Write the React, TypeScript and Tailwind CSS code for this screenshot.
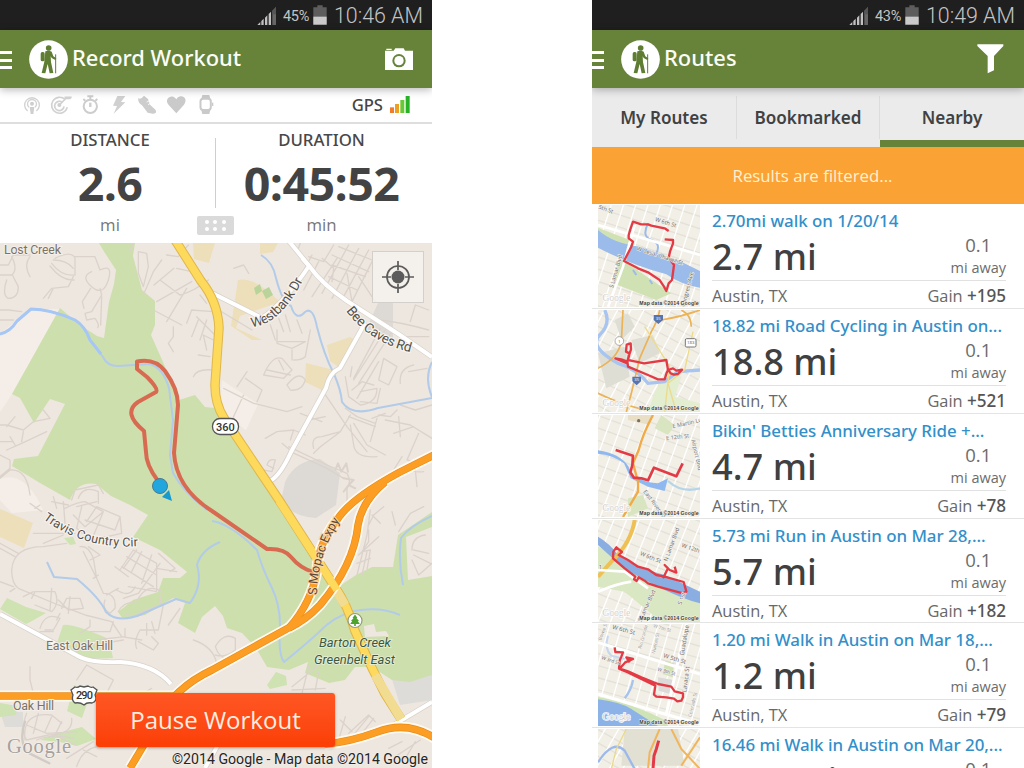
import type { ReactNode } from 'react';

const sans = "font-['Open_Sans','Noto_Sans',sans-serif]";
const noto = "font-['Noto_Sans','Open_Sans',sans-serif]";

function StatusBar({ battery, time }: { battery: string; time: string }) {
  return (
    <div className="flex h-[30px] shrink-0 items-center justify-end bg-[#1f1f1f] pr-[9px] font-['Roboto',sans-serif] text-[#c4c4c4]">
      <svg width="20" height="20" viewBox="0 0 60 60" className="mr-[6px]">
        <g fill="#c2c2c2">
          <path d="M1 60 L10 51 V60Z" />
          <path d="M13 60 V48 L20 41 V60Z M24 60 V38 L31 31 V60Z M35 60 V27 L42 20 V60Z" />
        </g>
        <path d="M46 60 V17 L57 6 V60Z" fill="#666" />
        <path d="M46 28 V17 L57 6 V28Z" fill="#555" />
      </svg>
      <span className="mt-[3px] w-[27px] text-[14.500px] tracking-[-0.3px] whitespace-nowrap">{battery}</span>
      <svg width="14" height="20" viewBox="0 0 42 60" className="mr-[7px] ml-[3px]">
        <path d="M13 1h16v6h12v52H1V7h12z" fill="#5d5d5d" />
        <path d="M1 35h40v24H1z" fill="#cacaca" />
      </svg>
      <span className="mt-[2px] flex w-[89px] justify-end text-[21.400px] font-light whitespace-nowrap">{time}</span>
    </div>
  );
}

function Hiker() {
  return (
    <svg width="39" height="39" viewBox="0 0 117 117" className="shrink-0">
      <circle cx="58.500" cy="58.500" r="58" fill="#fff" />
      <g fill="#5f7c33">
        <circle cx="59" cy="24" r="8.500" />
        <path d="M49 34 q10-4 19 1 l5 14 9 6-3 5-11-6-3-5 1 17 7 33-11 1-6-28-7 28-11-1 8-34z" />
        <rect x="35" y="36" width="12" height="28" rx="5" />
      </g>
      <path d="M80 43 V100" stroke="#5f7c33" strokeWidth="3" />
    </svg>
  );
}

function AppBar({ title, children }: { title: string; children: ReactNode }) {
  return (
    <div className="relative z-10 flex h-[58px] shrink-0 items-center bg-[#67833a] pr-[19px] shadow-[0_2px_8px_rgba(0,0,0,0.28)]">
      <div className="mt-[2px] mr-[17px] flex w-3 flex-col gap-[4.200px]">
        <div className="h-[3px] bg-white" />
        <div className="h-[3px] bg-white" />
        <div className="h-[3px] bg-white" />
      </div>
      <Hiker />
      <h1 className={`mb-px ml-1 flex-1 text-[21.900px] font-medium whitespace-nowrap text-[#fbfdf7] ${noto}`}>{title}</h1>
      {children}
    </div>
  );
}

function Sensors() {
  return (
    <div className="flex items-center pl-[23.300px]">
      <svg width="21.700" height="20" viewBox="70 286 65 60" fill="none" stroke="#d2d2d2" strokeWidth="4">
        <path d="M84 334 A22 22 0 1 1 110 334" />
        <path d="M88 323 A13.500 13.500 0 1 1 106 323" />
        <circle cx="97" cy="312" r="6" fill="#cfcfcf" stroke="none" />
        <path d="M90 322h14l-3 21h-8z" fill="#cfcfcf" stroke="none" />
      </svg>
      <svg width="31.700" height="20" viewBox="135 286 95 60" fill="none" stroke="#d2d2d2" strokeWidth="5">
        <path d="M195 299 A24 24 0 1 0 202 323" />
        <path d="M187 308 A14 14 0 1 0 192 320" />
        <circle cx="178" cy="316" r="6" fill="#cfcfcf" stroke="none" />
        <path d="M179 315 L196 298 V293 H215 M198 296h14" />
      </svg>
      <svg width="28.300" height="20" viewBox="230 286 85 60" fill="none" stroke="#cdcdcd" strokeWidth="6">
        <circle cx="270" cy="320" r="20" />
        <path d="M270 300V291M261 290h18M285 303l6-5M255 303l-6-5" />
        <path d="M270 322V309" strokeWidth="7" />
      </svg>
      <svg width="26.700" height="20" viewBox="315 286 80 60" fill="#d0d0d0">
        <path d="M352 289 L376 289 363 307 376 308 341 342 351 319 339 318Z" />
      </svg>
      <svg width="30" height="20" viewBox="395 286 90 60" fill="#cdcdcd">
        <path d="M414 295 Q421 301 431 288 L443 298 449 315 466 331 Q471 342 457 342 L442 339 425 317 Q411 308 414 295Z" />
        <path d="M439 307l11-5M443 315l11-6" stroke="#fff" strokeWidth="2.500" />
      </svg>
      <svg width="30" height="20" viewBox="485 286 90 60" fill="#cacaca">
        <path d="M528 341 L505 316 C492 300 507 287 519 291 Q526 294 528 299 Q531 292 540 290 C552 288 562 301 551 315Z" />
      </svg>
      <svg width="28.300" height="20" viewBox="575 286 85 60">
        <path d="M606 286h21l3 12h-27zM603 331h27l-3 12h-21z" fill="#cacaca" />
        <rect x="600.500" y="297" width="31" height="34" rx="8" fill="#fff" stroke="#cacaca" strokeWidth="6" />
        <path d="M635 309h4v10h-4z" fill="#cacaca" />
      </svg>
    </div>
  );
}

function Stat({ label, value, unit, className }: { label: string; value: string; unit: string; className: string }) {
  return (
    <div className={`flex flex-col items-center whitespace-nowrap ${className}`}>
      <div className={`mt-[6px] h-5 text-[16.800px] leading-5 font-medium text-[#484848] ${noto}`}>{label}</div>
      <div className="mt-[8px] h-[50px] text-[46.500px] leading-[50px] font-bold tracking-[-0.6px] text-[#434343]">{value}</div>
      <div className="mt-[7px] h-5 text-[16.800px] leading-5 text-[#777]">{unit}</div>
    </div>
  );
}

const orangeNorth =
  'M436 454 L400 472 Q350 499 337 520 Q318 544 317 570 Q312 602 289 628';
const orangeBranch = 'M385 482 Q362 501 358 525 Q354 565 320 605 Q306 620 289 628';
const orangeSouth = 'M292 626 L212 670 Q174 688 158 720 Q145 744 130 768';
const highway =
  'M175 240 L201 281 Q218 302 219 328 L215 385 Q215 404 224 418 L279 500 335 587 Q348 606 355 631 L372 668 385 694 401 719';
const whiteRoads = [
  'M288 240 L310 267 Q322 284 347 301 L400 335 432 357',
  'M212 293 L262 318 Q285 302 309 266 L302 258',
  'M365 323 L340 368 Q329 373 326 388 L291 452 Q280 476 270 481',
  'M0 614 L78 656 Q90 663 120 662 Q154 664 171 684',
  'M432 702 L390 727 M205 768 L218 745',
];
const creeks = [
  'M0 334 Q10 332 17 321 L31 309 Q50 309 75 320 Q85 326 90 340 L103 357 Q107 366 118 366 L150 364 Q163 368 169 388 L173 420 170 455 173 473 Q184 493 207 510',
  'M261 255 Q273 262 276 278 Q282 302 291 306 Q296 322 305 312 Q313 306 317 327 Q324 355 334 374 Q341 390 342 402 Q352 417 378 408 L432 398',
  'M47 562 L54 577 77 579 Q100 598 106 612 Q118 624 142 614 L176 599 190 603 Q203 585 197 565 Q201 550 220 542',
  'M212 521 Q231 524 257 550 Q262 568 272 588 Q280 605 280 625 Q278 655 284 662 Q305 645 318 633 Q334 616 354 611 Q380 606 400 615',
  'M403 585 Q398 560 401 538 Q410 526 432 516',
  'M432 362 Q424 378 432 397',
];

function StreetTiles() {
  return (
    <g fill="none" stroke="#dbd3cb" strokeLinecap="round" strokeLinejoin="round">
      <g transform="translate(0 240) scale(.33333)" strokeWidth="4">
        <path d="M0 75h25l15-30h50M0 105h35q20-15 0-55M20 120q-15 45 5 55 30 0 30-35l-18-35M90 50q-20 25 0 60M155 70q30 40 70 35M150 78q35 45 72 42M160 60q40 0 60 25M165 55q50-25 60 0v50M225 50h60l15 40q40-20 25 30t-50 20 0-45M220 110l-15 30-50 5-25 30M160 145l-15 30M272 145l-25 40 5 20M300 145l5 20-30 50-20 5 5 20 25-5q15 20 8 28M305 170l-3 85M0 210h25l40 5M0 240h40M390 35l10-30M415 35l25 5 5 40-15 60-15-40zM430 165l30-70 25-35M462 135l60-50M480 120l60 45M470 185l105-60M460 210l85 45M500 245l60-100M540 165q40-10 85-45M530 85l45 10-15-35M500 45l35 5 30-35M600 165l20 25M520 260v30l-15 20 15 25M560 250l15-40 65 5M575 290l20-50M600 300l20-60M590 230l60 60M620 330l-10-45 30 15M595 345l35 5M580 410q10-25 60-20M0 555h20l50 15 30-25 50-10-20-25M20 560l25-30M30 590l15 25M70 575l-5 30M0 605h40M20 630l45-20 75-35M0 645l30 15v25l-30 25M30 690q50-5 60 75M0 715l30-25M105 805l15-10M160 770l10 35M235 775q15-40 60-20v35M215 780l10-30 70-15 15 25M155 785l50 10M230 800l60-15" />
      </g>
      <g transform="translate(212 240) scale(.33333)" strokeWidth="4">
        <path d="M255 35l10-25M255 130l45-85M275 150l45-85M300 170l75-115M330 55l35 30-5 40M290 50l45 15 30-50M360 45l110 50M360 75l100 35M380 20l100 40M350 110l85 40M410 15l-80 145M440 25l-80 150M470 30l-75 140M480 65l-60 120M440 110l50 75M405 100l15 85M500 240q60 5 150 30M520 270l-95 150M505 265l-80 150M540 275l-100 155M420 380l-5 30M465 250l15 25M595 245l15-50 40 15M580 290h70M65 85l30-10 15 25M20 210l100 60M195 270v40l45 15 40-20M215 275l-15-40M235 275l-15-50M270 280l-15-40M190 300l-15-45M240 330v30M195 305h85M295 270l-15 80q-10 10-35 10M155 405q25-60 55-50l30 35-25 25zM165 390l70 15M200 360l15 30M225 435q35-45 55-15-10 35-45 30zM75 440l30-45M100 415l50 35-15 35M35 445l90 45 100 25 45-15M95 465l-35 75M160 595l35-20 50-5 35 15M245 570l-10 30M275 580l15-40 50-10M265 520l65 25M230 620l115 55 60 25q15 25 0 45v40M235 635l110 50 50 30M210 610l30 25M185 685l-20-10q5-20 25-15l-10 35-25-5M305 625q-10-35 25-35l55-15 30-50M385 575l-60 45-20 20M415 555l10 60q5 40 70 35M330 450l75 110 60 75M425 550l40 65 55 30M495 535l-20 70M410 530l80 30M400 505l35 25 55 20M520 520l-40 15M555 510l-20 20-35-5M505 445l-10 45-50-5M420 450l30-25 35 10M400 410l10 60 35 25q50-5 50-50l-50 10M500 420l15-65 40 25-25 55zM565 430q-5-45 40-55M590 395l55-10M500 365l-65 110M565 495l45 15 50-15M520 540l75 15 65 40M560 530l5 60M545 580l60-20M620 580l-35 80 40 10M590 665q-10 35 45 30M610 690l5 50M570 650l-50 80" />
        <path d="M370 690l8-20 10 25 15-25 5 25M395 715l30 5-15 15 20 10M395 755l15-20" strokeWidth="6" />
      </g>
      <g transform="translate(0 500) scale(.33333)" strokeWidth="4">
        <path d="M0 130l55 30M0 145l45 25M125 35l-35-25M190 5l5 65M195 25q40-20 60-20l55 30-55 45-35-35M245 20l-15 65 40 35M260 65l30-45 70 30-15 40-90-30M310 35l-35 85M360 50l5 50-90 20M100 100l125 0M130 130l60-25M200 130l-70 10q-90 0-95 70 0 40 20 55l120 50 80 30 80 20 30 45 60 10M0 245l40 15M70 290l30-15M45 265l-15 10M95 295l10-20 60 0q15 35-10 60l-50-20M150 330l5-65M185 325l15-30 40 0 10 30-45 5-30-30M210 290l-5 50M250 155l20 40 20 40-10-60q-15-40-40-35M270 180l30-15-35-25M280 235l15-10M290 235l20 45q40 0 35 45l-15 15q-25-15-15-40M320 285l35-20M350 270q40 25 55-10M360 210l40-60 70 40v85l-85-15M380 170l90 55M365 200l95 60M410 150l-40 55M425 155l-30 60M455 165l-30 85M475 160l50 45-15 10M470 205l60 10M480 190l-65 90-45 15M385 230l-40-30M355 335q15-30 55-30 30-60 75-30l-5 40-70 35-30-5M400 350q40-25 90-35l-15 75-55 0q-20 35-10 55M440 370v35M455 365l10 35M505 375l35-50M455 410l20 20-15 20-45-25M120 385q15-50 60-30l-20 35-25 0M120 395h40M240 400l30-20 0-20M180 340l-10 20M270 395l60 0 10-30M285 420l90-10v-25M280 435l90-15M75 720q-10-85 80-75l30 25M80 640q-20 50 0 80l65-15q75 0 70-50M80 675l60 25 90-5M115 640l-15 60M155 650l-20 45M185 665l-20 40 60 30M110 720q50-20 110-5M200 775l80-50M230 800q15-50 60-60M250 750l40 20M90 500v40l10 40M230 540l30-45 80 45-30 60M580 420q60 20 70 70M395 600l60-35" />
        <path d="M75 665q-18 50 3 90l70 35" strokeWidth="7" stroke="#d2cbc5" />
      </g>
      <g transform="translate(212 500) scale(.33333)" strokeWidth="4">
        <path d="M10 440q25-45 60-25v35q-30 25-60 15M10 440q10 35 45 40M470 75l15-30 30-25M470 90v35l-20 30 25-5-10 60M440 165l60-55M435 190l40-15M450 225l15-70M480 45l25 25M475 30l-10 75-30 120M600 150q0-40 40-45M605 150l45 10M605 165l50 25M600 180l20 45 40-35M540 35l10 40M560 95l35-55 40-20M240 560l80-65M240 570l100-5M270 580l20-80M310 570l10-55M380 720l20-70M410 700l60-55 20 20M420 710l50-60M450 700l35-45M385 660l35 35M530 745l40-20M550 770l75-50M580 775l30-50" />
      </g>
    </g>
  );
}

function WorkoutMap() {
  return (
    <svg width="432" height="525" viewBox="0 243 432 525" className="block" fontFamily="Roboto, sans-serif">
      <defs>
        <path id="westbank" d="M252 327 Q282 325 307 272" />
        <path id="beecaves" d="M346 311 Q371 344 414 353" />
        <path id="travis" d="M43 519 Q85 550 140 546" />
        <path id="mopac" d="M317 595 Q317 555 341 519" />
      </defs>
      <rect y="243" width="432" height="525" fill="#eee7df" />
      <path d="M0 334 L30 309 60 309 12 394 0 412Z M0 479 Q25 470 43 510 L12 513 0 500Z M222 380 L258 404 246 430 220 412Z" fill="#f5eee8" />
      <path d="M378 303h15v35l-27-8zM285 482q10-22 35-23l20 14-4 32-20 13q-30-2-34-22z" fill="#dddad6" />
      <path d="M390 673 L432 658 432 700 400 705Z M0 712h23v15H5z" fill="#dddcd8" />
      <path d="M238 280 Q254 276 280 302 L240 316 236 328 262 340 252 340 231 326Z M193 243h22l-6 20-15-4zM260 243h18l-5 9-13 2zM327 345 350 337 356 340 340 368 330 361ZM306 363 334 370 322 390 305 382ZM0 509 33 523 24 548 0 537Z" fill="#eddfb9" />
      <path d="M254 288l6-4 2 7-6 4zM262 291l7-4 4 8-7 4z" fill="#b9d49b" />
      <path
        d="M99 243 L103 250 116 270 114 284 109 302 104 338 97 336 80 325 60 308 12 394 20 398 34 423 50 399 65 404 38 456 14 459 12 466 40 483 70 500 Q77 481 96 484 L111 496 130 505 148 515 133 537 160 550 187 572 180 578 163 578 158 592 133 600 118 612 123 619 145 615 173 598 185 603 178 623 195 633 202 617 215 606 223 616 227 628 242 633 256 648 267 667 289 670 308 662 305 673 329 683 345 680 355 667 372 667 392 680 410 682 432 675 V635 L432 576 408 580 406 537 432 527 V512 L398 535 393 567 372 567 356 575 341 585 318 560 238 440 215 408 205 407 195 395 179 400 163 362 151 335 155 325 155 301 142 290 133 256 135 243Z"
        fill="#cedfae"
      />
      <path d="M7 598 L26 607 46 613 32 621 26 624 0 609Z M63 625 Q72 623 109 639 L113 658 86 659 73 651 57 643Z M0 703 17 706 16 715 0 717Z M74 685 90 695 82 718 67 711ZM40 740 55 734 82 727 96 739 77 746 60 742ZM267 685 276 672 286 676 287 685 270 689ZM64 538l9-1 3 7-6 1z" fill="#cee2b2" />
      <path d="M364 626l10-2 2 8 10-1 3 5-24 1z" fill="#eee7df" />
      <StreetTiles />
      {creeks.map((d) => (
        <path key={d} d={d} fill="none" stroke="#b2cbe9" strokeWidth="2" strokeLinejoin="round" />
      ))}
      <path d="M0 334 Q10 332 17 321 L31 309 Q50 309 75 320 Q85 326 90 340 L101 354" fill="none" stroke="#a6c6f6" strokeWidth="3" />
      {whiteRoads.map((d) => (
        <path key={d} d={d} fill="none" stroke="#d8d2ca" strokeWidth="5.500" />
      ))}
      {whiteRoads.map((d) => (
        <path key={d} d={d} fill="none" stroke="#fff" strokeWidth="4" />
      ))}
      <path d={highway} fill="none" stroke="#dfb64c" strokeWidth="9.500" />
      <path d={highway} fill="none" stroke="#fdd95c" strokeWidth="7.500" />
      <path d="M336 590l9 15M375 675l26 44" stroke="#f2dc92" strokeWidth="9" />
      <g fill="none" strokeLinejoin="round">
        <g stroke="#fffaf0" strokeWidth="11">
          <path d={orangeNorth} />
          <path d={orangeBranch} />
          <path d={orangeSouth} />
          <path d="M0 696H180M325 744 Q350 742 377 732 Q408 720 436 739" />
        </g>
        <g stroke="#e78b19" strokeWidth="7.500">
          <path d={orangeNorth} />
          <path d={orangeBranch} />
          <path d={orangeSouth} />
          <path d="M0 696H180M325 744 Q350 742 377 732 Q408 720 436 739" />
        </g>
        <g stroke="#fc9e23" strokeWidth="6.200">
          <path d={orangeNorth} />
          <path d={orangeBranch} />
          <path d={orangeSouth} />
          <path d="M0 696H180M325 744 Q350 742 377 732 Q408 720 436 739" />
        </g>
        <path d="M279 501L337 590" stroke="#fdd95c" strokeWidth="7.500" />
        <path
          d="M313 572 Q300 568 291 557 Q284 548 267 549 L212 511 Q176 488 174 453 L178 405 Q178 389 165 371 Q155 358 137 361.500 V369 L147 377 Q159 389 156 392 L138 402 Q122 413 144 431 L146 452 Q146 465 158 481"
          stroke="#d76a50"
          strokeWidth="4"
        />
      </g>
      <circle cx="160" cy="486" r="7.500" fill="#21a6de" stroke="#487b91" strokeWidth="1" />
      <path d="M162 497l7-7 3 11z" fill="#169bd0" />
      <g stroke="#555" strokeWidth="1.300" fill="#fff">
        <rect x="212.500" y="418.500" width="26" height="16" rx="7.500" />
        <path d="M75 687q3 1 5-1l4 1 4-1q3 2 5 1l4 3-2 5q3 6-3 8-5-1-8 2-4-3-9-2-4-3-2-8l-2-5z" />
      </g>
      <g fontSize="11" fill="#333" textAnchor="middle" fontWeight="500">
        <text x="225.500" y="430.500">360</text>
        <text x="84.500" y="699" textLength="17">290</text>
      </g>
      <circle cx="355" cy="620.500" r="7" fill="#fff" stroke="#8f9d75" strokeWidth="1.200" />
      <path d="M355 614.500l2.500 3.500h-1l2.500 3h-1.200l2 3h-4v2h-1.600v-2h-4l2-3h-1.200l2.500-3h-1z" fill="#4da32e" />
      <g fill="#7c7266" fontSize="12.500" stroke="#f4efe9" strokeWidth="2" paintOrder="stroke">
        <text x="4" y="254" textLength="57">Lost Creek</text>
        <text x="46" y="649.500" textLength="67">East Oak Hill</text>
        <text x="13" y="709.500" textLength="41">Oak Hill</text>
      </g>
      <g fill="#555049" fontSize="13.500" stroke="#f8f4ef" strokeWidth="2.200" paintOrder="stroke">
        <text><textPath href="#westbank" textLength="72">Westbank Dr</textPath></text>
        <text><textPath href="#beecaves" textLength="78">Bee Caves Rd</textPath></text>
        <text fontSize="12.500"><textPath href="#travis" textLength="101">Travis Country Cir</textPath></text>
        <text fill="#5c4735" fontSize="12.500" stroke="#fbd6a3"><textPath href="#mopac" textLength="79">S Mopac Expy</textPath></text>
      </g>
      <g fill="#3c5940" fontSize="13" fontStyle="italic" stroke="#e6efd9" strokeWidth="1.500" paintOrder="stroke">
        <text x="319" y="647" textLength="72">Barton Creek</text>
        <text x="314" y="664" textLength="81">Greenbelt East</text>
      </g>
      <text x="7" y="753" fontFamily="Liberation Serif, serif" fontSize="20.500" textLength="64" fill="#a6a19c" stroke="#f5f1ed" strokeWidth="1.500" paintOrder="stroke">Google</text>
      <text x="172" y="763.500" fontSize="14" textLength="256" lengthAdjust="spacingAndGlyphs" fill="#252525" stroke="#f2ede8" strokeWidth="1.500" paintOrder="stroke">©2014 Google - Map data ©2014 Google</text>
    </svg>
  );
}

function RecordWorkout() {
  return (
    <section className="flex h-full w-[432px] flex-col overflow-hidden bg-white">
      <StatusBar battery="45%" time="10:46 AM" />
      <AppBar title="Record Workout">
        <svg width="28" height="22" viewBox="0 0 84 66">
          <path d="M0 8h26l5-7h25l4 7h24v58H0zM4 2h16v4H4z" fill="#fff" />
          <circle cx="42" cy="38" r="20" fill="#67833a" />
          <circle cx="42" cy="38" r="14" fill="#fff" />
        </svg>
      </AppBar>
      <div className="flex h-9 shrink-0 items-center justify-between border-b-2 border-[#dedede] pr-[22px]">
        <Sensors />
        <div className={`flex items-center gap-[7px] text-[16.600px] font-medium text-[#454545] ${noto}`}>
          <span>GPS</span>
          <svg width="20" height="17" viewBox="0 0 60 51">
            <path d="M0 34h12v17H0z" fill="#ef7d2c" />
            <path d="M15 24h12v27H15z" fill="#eba126" />
            <path d="M31 12h12v39H31z" fill="#6ac834" />
            <path d="M47 0h12v51H47z" fill="#27b326" />
          </svg>
        </div>
      </div>
      <div className="relative flex h-[119px] shrink-0">
        <Stat label="DISTANCE" value="2.6" unit="mi" className="w-[220px]" />
        <div className="-ml-[5px] mt-[14px] h-[70px] w-px bg-[#cfcfcf]" />
        <Stat label="DURATION" value="0:45:52" unit="min" className="w-[211px]" />
        <div className="absolute top-[92px] left-[197px] grid h-[19px] w-[37px] grid-cols-3 place-items-center rounded-[2px] bg-[#dadada] px-[6px] py-[2px]">
          {[0, 1, 2, 3, 4, 5].map((i) => (
            <div key={i} className="size-1 rounded-full bg-white" />
          ))}
        </div>
      </div>
      <div className="relative h-[525px]">
        <WorkoutMap />
        <div className="absolute top-2 left-[372px] flex size-[52px] items-center justify-center border border-[#d3cfca] bg-[#f5f2ee]/85">
          <svg width="32" height="32" viewBox="0 0 32 32" fill="none" stroke="#5b5b5b" strokeWidth="1.700">
            <circle cx="16" cy="16" r="11" />
            <circle cx="16" cy="16" r="6.500" fill="#5b5b5b" stroke="none" />
            <path d="M16 0v9M16 23v9M0 16h9M23 16h9" />
          </svg>
        </div>
        <button className="absolute top-[450px] left-[96px] flex h-[54px] w-[239px] items-center justify-center rounded-[3px] bg-linear-to-b from-[#ff5723] to-[#fb3e04] text-[24px] whitespace-nowrap text-[#ffede0] shadow-[0_1px_3px_rgba(0,0,0,0.35)]">
          Pause Workout
        </button>
      </div>
    </section>
  );
}

function Thumb({ children }: { children: ReactNode }) {
  return (
    <svg width="102" height="102" viewBox="0 0 306 306" className="mt-[1px] block shrink-0" fontFamily="Open Sans, sans-serif">
      <rect width="306" height="306" fill="#f2efe6" />
      {children}
      <text x="13" y="287" fontFamily="Liberation Serif, serif" fontSize="30" textLength="84" fill="#d5d2cf" stroke="#fff" strokeWidth="4" paintOrder="stroke">Google</text>
      <text x="124" y="300" fontFamily="Liberation Sans, sans-serif" fontSize="16" fontWeight="bold" textLength="178" fill="#3d3d3d" stroke="#f4f1e9" strokeWidth="3" paintOrder="stroke">Map data ©2014 Google</text>
    </svg>
  );
}

const red = { fill: 'none', stroke: '#e33b46', strokeWidth: 7, strokeLinejoin: 'round' as const };

function Grid({ a, b }: { a: string; b: string }) {
  const steps = [-300, -265, -230, -195, -160, -125, -90, -55, -20, 15, 50, 85, 120, 155, 190, 225, 260, 295];
  return (
    <g transform="translate(153 153)" strokeWidth="4">
      <g transform={a} stroke="#e4e1d9">
        {steps.map((s) => <path key={s} d={`M-240 ${s}H240`} />)}
      </g>
      <g transform={b} stroke="#fff">
        {steps.map((s) => <path key={s} d={`M-240 ${s}H240`} />)}
      </g>
    </g>
  );
}

function ThumbTown() {
  return (
    <Thumb>
      <Grid a="rotate(18)" b="rotate(108)" />
      <path d="M0 68 95 105 85 130 0 90Z M65 160 220 265 175 285 45 235Z" fill="#d0e2b4" />
      <path d="M0 75 Q45 115 125 125 Q195 150 245 168 L306 198 V248 Q250 240 205 208 Q100 180 0 128Z" fill="#9bbbea" />
      <path d="M150 55q-20 40 10 50t15 40M105 195l10 15M155 225l8 12" fill="none" stroke="#9bbbea" strokeWidth="6" />
      <path d="M110 60 75 185 30 306M0 60 306 150" fill="none" stroke="#fff" strokeWidth="8" />
      <path d="M212 78 L200 70 160 62 150 58 130 58 105 50 98 70 92 90 92 100 105 110 100 125 78 168 120 190 150 202 170 215 184 224 198 245 205 258 212 235 222 225 228 180 212 158 216 140 225 115 225 105 200 103" {...red} />
      <g fill="#666" fontSize="17" stroke="#f5f2eb" strokeWidth="3" paintOrder="stroke">
        <text x="170" y="48" transform="rotate(17 170 48)">W 6th St</text>
        <text x="115" y="135" transform="rotate(18 115 135)">W Cesar Chavez St</text>
        <text x="45" y="250" transform="rotate(-74 45 250)">S Lamar Blvd</text>
        <text x="260" y="306" transform="rotate(-75 260 306)">Congress Ave</text>
        <text x="0" y="10" transform="rotate(20 0 10)">5th St</text>
      </g>
    </Thumb>
  );
}

function ThumbCycling() {
  return (
    <Thumb>
      <Grid a="rotate(28)" b="rotate(118)" />
      <path d="M50 30l40-20 20 40-40 40zM100 90l65-15 20 55-60 30zM0 130l80-20 15 90-70 35z" fill="#dfded4" />
      <path d="M210 180l40 20-20 60 76 20v26H150l20-60z" fill="#e3edcf" />
      <path d="M20 0q20 40-15 75T60 160q55 15 90 60l50-5 40-30 66-5" fill="none" stroke="#a7c5f0" strokeWidth="10" />
      <path d="M75 0 70 95Q60 145 0 175M185 0Q180 30 160 65L125 145 100 250 85 306M190 30Q250 20 306 0M250 0Q280 15 280 50M0 250 Q60 280 140 300" fill="none" stroke="#ebb256" strokeWidth="5" />
      <path d="M285 65 260 180 210 220 235 306M140 50 215 170 200 306" fill="none" stroke="#eddb8a" strokeWidth="4" />
      <path d="M88 160 52 145 70 148 88 155 94 130 84 125 86 104 98 100 99 118 95 130 90 150 110 154 138 160 205 150 210 180 206 188 200 208 180 208 150 195 90 170 88 152M210 180 225 175 235 182 252 179 240 192 228 194 218 190 208 175" {...red} />
      <circle cx="64" cy="93" r="13" fill="#fff" stroke="#888" strokeWidth="2" />
      <rect x="262" y="86" width="32" height="25" rx="4" fill="#fff" stroke="#777" strokeWidth="3" />
      <path d="M167 15h28v15l-14 12-14-12zM103 200h26v14l-13 12-13-12z" fill="#5674af" />
      <g fontSize="13" textAnchor="middle" fill="#555">
        <text x="64" y="98">1</text><text x="278" y="103">183</text><text x="181" y="29" fill="#fff">35</text><text x="116" y="214" fill="#fff">35</text>
      </g>
    </Thumb>
  );
}

function ThumbRide() {
  return (
    <Thumb>
      <Grid a="rotate(20)" b="rotate(110)" />
      <path d="M90 0h75l-10 30-65-15z" fill="#e8dfc6" />
      <path d="M190 0l40 30-20 30-40-20zM90 250l45-10 15 40-60 26z" fill="#d8e5c0" />
      <path d="M0 106Q65 115 92 155 L105 184 Q150 205 180 205 L210 190 200 228 150 215 98 190 78 145 Q45 120 0 116Z" fill="#8fb8f0" />
      <path d="M210 198Q250 235 306 220" fill="none" stroke="#b7d5e9" strokeWidth="7" />
      <path d="M165 0Q135 55 122 105L105 145 120 200 120 230 75 306" fill="none" stroke="#f0aa48" strokeWidth="7" />
      <path d="M53 105 105 122 103 150 97 172 108 188 130 190 150 196 168 158 235 184 254 145" {...red} strokeWidth="8" />
      <g fill="#777" fontSize="17" stroke="#f6f3ed" strokeWidth="3" paintOrder="stroke">
        <text x="225" y="40" transform="rotate(-13 225 40)">E Martin Luther</text>
        <text x="205" y="76" transform="rotate(-7 205 76)">E 12th St</text>
        <text x="280" y="75" transform="rotate(77 280 75)">Airport Blvd</text>
        <text x="135" y="230" transform="rotate(53 135 230)">East Riverside Dr</text>
      </g>
      <circle cx="122" cy="17" r="5" fill="#806f60" />
    </Thumb>
  );
}

function ThumbRun() {
  return (
    <Thumb>
      <Grid a="rotate(22)" b="rotate(112)" />
      <path d="M0 80Q65 105 85 140L180 180 306 235V306H190L80 215 0 200Z" fill="#d9e7c2" />
      <path d="M0 50Q35 70 60 105L120 142 200 165 306 215V250Q250 235 180 200L85 150 50 120 0 75Z" fill="#8aaee2" />
      <path d="M110 0Q100 65 45 120L0 170" fill="none" stroke="#efc054" strokeWidth="12" />
      <path d="M0 215Q60 190 100 185M0 150L80 155 150 205" fill="none" stroke="#fff" strokeWidth="8" />
      <path d="M55 82 72 96 62 105 90 120 120 140 150 148 175 165 200 170 257 186 265 215 255 220 180 200 150 190 140 182 122 172 116 183 108 178 112 170 80 145 45 115 46 95Z M195 175 210 145 200 135 215 150 235 158 230 140" {...red} />
      <g fill="#666" fontSize="17" stroke="#f6f3ed" strokeWidth="3" paintOrder="stroke">
        <text x="125" y="105" transform="rotate(22 125 105)">W 6th St</text>
        <text x="208" y="125" transform="rotate(-70 208 125)">N Lamar Blvd</text>
        <text x="250" y="80" transform="rotate(20 250 80)">W 12th St</text>
        <text x="130" y="306" transform="rotate(-65 130 306)">S Lamar Blvd</text>
        <text x="250" y="255" transform="rotate(-70 250 255)">S 1st</text>
        <text x="2" y="147">1</text>
      </g>
    </Thumb>
  );
}

function ThumbWalk() {
  return (
    <Thumb>
      <Grid a="rotate(16)" b="rotate(106)" />
      <path d="M202 110l26 8-4 42-30-10z" fill="#d3e1b5" />
      <path d="M180 160l45 8-8 42-35-10z" fill="#dcdad8" />
      <path d="M30 35q-12 40 10 60l40 10" fill="none" stroke="#c6d8ef" strokeWidth="6" />
      <path d="M105 168q-5 30-25 55" fill="none" stroke="#a8c3eb" strokeWidth="7" />
      <path d="M0 218Q110 240 205 290L210 306H0Z" fill="#cfe4b6" />
      <path d="M0 226Q70 235 100 255L180 306H0Z" fill="#8db2e8" />
      <path d="M0 210 200 270 306 300M265 0 205 270M0 55 306 150" fill="none" stroke="#fff" strokeWidth="9" />
      <path d="M50 70 52 84 75 85 70 98 65 110 63 133 90 142 130 160 180 180 220 188 230 202 255 208 255 220 250 230 238 232 228 224 205 220 175 218 168 212 172 185 130 165 90 145 64 135 82 115 105 105 85 100 95 115" {...red} />
      <g fill="#666" fontSize="18" stroke="#f6f3ed" strokeWidth="3" paintOrder="stroke">
        <text x="42" y="14" transform="rotate(15 42 14)">W 6th St</text>
        <text x="195" y="100" transform="rotate(17 195 100)">W 5th St</text>
        <text x="10" y="105" transform="rotate(18 10 105)" fontSize="14">W 3rd St</text>
        <text x="178" y="140" transform="rotate(15 178 140)" fontSize="14">W 3th St</text>
        <text x="257" y="95" transform="rotate(-80 257 95)">Guadalupe St</text>
        <text x="265" y="205" transform="rotate(-83 265 205)">Lavaca St</text>
        <g fontSize="14" fill="#999">
          <text x="130" y="75" transform="rotate(-75 130 75)">Rio Grande</text>
          <text x="170" y="90" transform="rotate(-77 170 90)">Nueces St</text>
          <text x="165" y="10" transform="rotate(15 165 10)">W 7th St</text>
          <text x="10" y="50" transform="rotate(-70 10 50)">Bowie St</text>
          <text x="280" y="280" transform="rotate(-77 280 280)">Colorado St</text>
        </g>
      </g>
    </Thumb>
  );
}

function ThumbLong() {
  return (
    <Thumb>
      <Grid a="rotate(30)" b="rotate(120)" />
      <path d="M80 0h160l20 110H70z" fill="#e2dfd3" />
      <path d="M0 100Q45 30 80 65 L110 120" fill="none" stroke="#9cb9ec" strokeWidth="7" />
      <path d="M185 0 155 70 150 120M220 0 250 60 306 120M306 25 250 110" fill="none" stroke="#efb65e" strokeWidth="6" />
      <path d="M85 0 55 60 40 120" fill="none" stroke="#ead98a" strokeWidth="4" />
      <path d="M182 35 175 60 168 80 165 120" {...red} strokeWidth="9" />
    </Thumb>
  );
}

const routes = [
  { title: '2.70mi walk on 1/20/14', distance: '2.7 mi', gain: '+195', thumb: <ThumbTown /> },
  { title: '18.82 mi Road Cycling in Austin on...', distance: '18.8 mi', gain: '+521', thumb: <ThumbCycling /> },
  { title: "Bikin' Betties Anniversary Ride +...", distance: '4.7 mi', gain: '+78', thumb: <ThumbRide /> },
  { title: '5.73 mi Run in Austin on Mar 28,...', distance: '5.7 mi', gain: '+182', thumb: <ThumbRun /> },
  { title: '1.20 mi Walk in Austin on Mar 18,...', distance: '1.2 mi', gain: '+79', thumb: <ThumbWalk /> },
  { title: '16.46 mi Walk in Austin on Mar 20,...', distance: '16.5 mi', gain: '+210', thumb: <ThumbLong /> },
];

function Routes() {
  return (
    <section className="flex h-full w-[432px] flex-col overflow-hidden bg-white">
      <StatusBar battery="43%" time="10:49 AM" />
      <AppBar title="Routes">
        <svg width="28" height="30" viewBox="0 0 84 90">
          <path d="M1 1h78v5L51 36v43l-19 9V36L1 6z" fill="#fff" />
        </svg>
      </AppBar>
      <nav className={`flex h-[59px] shrink-0 bg-[#ebebeb] text-[17.100px] font-semibold text-[#414141] ${noto}`}>
        <div className="flex w-36 items-center justify-center pt-px">My Routes</div>
        <div className="my-2 flex w-36 items-center justify-center border-x border-[#dcdcdc] pt-px">Bookmarked</div>
        <div className="flex w-36 items-center justify-center border-b-[7px] border-[#67833a] pt-[8px]">Nearby</div>
      </nav>
      <div className="flex h-[57px] shrink-0 items-center justify-center bg-[#fba234] pt-[1px] pl-[9px] text-[16.800px] text-[#fff1cf]">Results are filtered...</div>
      <div className="flex flex-col">
        {routes.map((r) => (
          <article key={r.title} className="flex h-[104.850px] shrink-0 border-b border-[#e4e4e4] pl-[6px]">
            {r.thumb}
            <div className="ml-3 w-[294px] whitespace-nowrap">
              <h2 className={`mt-[6px] h-[22px] text-[16.900px] leading-[22px] font-medium tracking-[-0.02px] text-[#328fca] ${noto}`}>{r.title}</h2>
              <div className="flex h-[49px] justify-between border-b border-[#e1e1e1]">
                <div className={`mt-[2px] text-[36.200px] leading-[44px] font-medium text-[#404040] ${noto}`}>{r.distance}</div>
                <div className="flex flex-col items-center text-[#6c6c6c]">
                  <div className="mt-[3px] h-5 text-[18.500px] leading-5">0.1</div>
                  <div className="mt-[3px] h-5 text-[14.500px] leading-5">mi away</div>
                </div>
              </div>
              <div className="mt-[4px] flex justify-between text-[16.400px] leading-[21px] text-[#686868]">
                <span>Austin, TX</span>
                <span>Gain <b className={`text-[17.100px] font-medium text-[#555] ${noto}`}>{r.gain}</b></span>
              </div>
            </div>
          </article>
        ))}
      </div>
    </section>
  );
}

export default function App() {
  return (
    <main className={`flex h-[768px] w-[1024px] justify-between overflow-hidden bg-white ${sans}`}>
      <RecordWorkout />
      <Routes />
    </main>
  );
}
